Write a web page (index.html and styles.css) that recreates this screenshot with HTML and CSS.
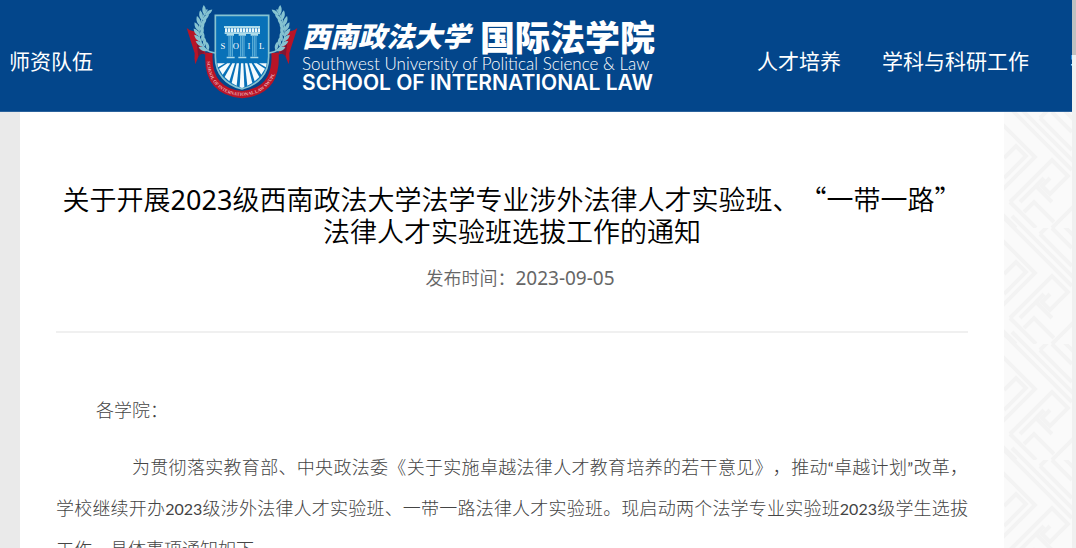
FILE: index.html
```
<!DOCTYPE html>
<html lang="zh-CN">

<head>
    <meta charset="UTF-8">
    <title>西南政法大学国际法学院</title>
    <link rel="stylesheet" href="styles.css">
</head>

<body>
    <div class="page">
        <header class="header">
            <nav class="menu">
                <a href="#">师资队伍</a>
            </nav>
            <a class="brand" href="#">
                <svg class="emblem" viewBox="0 0 390 300" aria-hidden="true">
                    <defs>
                        <g id="leaf">
                            <path d="M0 4C-13 0 -17 -11 -16 -22C-5 -17 0 -9 0 4Z" />
                            <path d="M0 4C11 0 15 -10 13 -21C4 -16 -1 -8 0 4Z" />
                        </g>
                        <g id="laurel">
                            <path d="M106 159Q72 157 60 120Q48 80 82 28" fill="none" stroke="#86c3d1" stroke-width="4" />
                            <use href="#leaf" transform="translate(76 42) rotate(26)" />
                            <use href="#leaf" transform="translate(68 57) rotate(20)" />
                            <use href="#leaf" transform="translate(62 73) rotate(12)" />
                            <use href="#leaf" transform="translate(59 89) rotate(2)" />
                            <use href="#leaf" transform="translate(60 105) rotate(-8)" />
                            <use href="#leaf" transform="translate(64 121) rotate(-16)" />
                            <use href="#leaf" transform="translate(71 136) rotate(-26)" />
                            <use href="#leaf" transform="translate(82 149) rotate(-38)" />
                        </g>
                        <g id="ribbon">
                            <path fill="#b81427" d="M20 84Q35 98 49 92Q50 124 75 152L77 164Q62 158 57 166L46 193Q42 177 44 160Q33 125 20 84Z" />
                            <path fill="#7d1733" d="M49 118Q57 145 75 160Q60 160 55 171Z" />
                        </g>
                        <path id="ring" d="M81 184C83 322 289 322 291 184" />
                    </defs>
                    <path d="M87 158Q79 274 186 284Q293 274 285 158" fill="none" stroke="#b81427" stroke-width="22" />
                    <use href="#ribbon" />
                    <use href="#ribbon" transform="translate(372 0) scale(-1 1)" />
                    <g fill="#86c3d1">
                        <use href="#laurel" />
                        <use href="#laurel" transform="translate(372 0) scale(-1 1)" />
                    </g>
                    <path d="M106 46H266V170C266 222 234 255 186 267C138 255 106 222 106 170Z" fill="#0871b8" stroke="#86c3d1" stroke-width="5" />
                    <g fill="#f4fbfd">
                        <path d="M183 190H190L193 261L186 264L179 261Z" />
                        <path d="M170 190H177L170 257L155 249Z" />
                        <path d="M195 190H202L217 249L202 257Z" />
                        <path d="M157 190H165L148 244L134 231Z" />
                        <path d="M207 190H215L238 231L224 244Z" />
                        <path d="M142 190H151L128 224L117 206Z" />
                        <path d="M221 190H230L255 206L244 224Z" />
                        <path d="M119 190H135L114 202L112 190Z" />
                        <path d="M237 190H253H260L258 202Z" />
                    </g>
                    <g fill="#acdbe9">
                        <path d="M132 78H240V84H132ZM134 97H240V102H134Z" />
                        <path d="M140 102H162V107H140ZM176 102H198V107H176ZM212 102H234V107H212Z" />
                        <path d="M140 170H164V175H140ZM175 170H199V175H175ZM211 170H235V175H211Z" />
                    </g>
                    <path d="M135 91H240" stroke="#e8f7fa" stroke-width="12" stroke-dasharray="7 2" />
                    <path d="M147 107V170M152 107V170M157 107V170M182 107V170M187 107V170M192 107V170M218 107V170M223 107V170M228 107V170" stroke="#67b6dc" stroke-width="3" />
                    <g class="emblem-name">
                        <text x="129" y="147">S</text>
                        <text x="168" y="147">O</text>
                        <text x="207" y="147">I</text>
                        <text x="245" y="147">L</text>
                    </g>
                    <text class="emblem-ring"><textPath href="#ring">SCHOOL OF INTERNATIONAL LAW SWUPL</textPath></text>
                </svg>
                <span class="brand-text">
                    <span class="brand-cn"><span class="university">西南政法大学</span><span class="school">国际法学院</span></span>
                    <span class="university-en">Southwest University of Political Science &amp; Law</span>
                    <span class="school-en">SCHOOL OF INTERNATIONAL LAW</span>
                </span>
            </a>
            <nav class="menu">
                <a href="#">人才培养</a>
                <a href="#">学科与科研工作</a>
                <a href="#">学生工作</a>
            </nav>
        </header>

        <main class="content">
            <article class="article">
                <h1>关于开展<span class="num">2023</span>级西南政法大学法学专业涉外法律人才实验班、“一带一路”法律人才实验班选拔工作的通知</h1>
                <p class="date">发布时间：<time datetime="2023-09-05">2023-09-05</time></p>
                <div class="text">
                    <p class="greeting">各学院：</p>
                    <p>为贯彻落实教育部、中央政法委《关于实施卓越法律人才教育培养的若干意见》，推动<span class="latin">“</span>卓越计划<span class="latin">”</span>改革，学校继续开办<span class="latin">2023</span>级涉外法律人才实验班、一带一路法律人才实验班。现启动两个法学专业实验班<span class="latin">2023</span>级学生选拔工作，具体事项通知如下</p>
                </div>
            </article>
        </main>
    </div>
    <div class="scrollbar">
        <div class="thumb"></div>
    </div>
</body>

</html>
```
FILE: styles.css
```
* {
    box-sizing: border-box;
}

body {
    margin: 0;
    height: 100vh;
    display: flex;
    overflow: hidden;
    font-family: "Noto Sans CJK SC", sans-serif;
    text-spacing-trim: space-all;
}

a {
    color: white;
    text-decoration: none;
}

.page {
    flex: 1;
    min-width: 0;
    display: flex;
    flex-direction: column;
    overflow: hidden;
}

/* header */
.header {
    flex: none;
    display: flex;
    height: 112px;
    padding-left: 9px;
    background-color: #03468b;
    border-bottom: 1px solid #2a629c;
    overflow: hidden;
}

.menu {
    flex: none;
    display: flex;
    align-items: center;
    gap: 41px;
    padding-top: 8px;
    font-size: 21px;
    white-space: nowrap;
}

.brand {
    flex: none;
    display: flex;
    margin: 0 102px 0 87px;
}

.emblem {
    width: 130px;
    height: 100px;
}

.emblem-name {
    font-family: "Liberation Serif", serif;
    font-size: 26px;
    fill: white;
    text-anchor: middle;
}

.emblem-ring {
    font-family: "Liberation Serif", serif;
    font-size: 14px;
    font-weight: bold;
    fill: #e9a9b2;
}

.brand-text {
    display: flex;
    flex-direction: column;
    width: 353px;
    margin-left: -8px;
    padding-top: 15px;
    white-space: nowrap;
}

.brand-cn {
    display: flex;
    justify-content: space-between;
    align-items: center;
    height: 40px;
    font-weight: 900;
}

.university {
    font-size: 28px;
    font-style: italic;
}

.school {
    font-size: 35px;
}

.university-en {
    font-family: Lato, sans-serif;
    font-size: 17px;
    font-weight: 300;
    line-height: 18px;
}

.school-en {
    font-family: Inter, sans-serif;
    font-size: 21px;
    font-weight: 600;
    line-height: 20px;
}

/* article */
.content {
    flex: 1;
    min-height: 0;
    display: flex;
    padding: 0 68px 0 20px;
    background-color: #fafafa;
    background-image: linear-gradient(#eaeaea, #eaeaea), url("data:image/svg+xml,%3Csvg xmlns='http://www.w3.org/2000/svg' width='68' height='116' fill='none' stroke='%23f3f3f3' stroke-width='4'%3E%3Cpath d='M-4 -14L68 58M-4 102L68 174M8 -12L72 52M8 104L72 168M-4 10L31 45L-4 80M36 6L48 -6M36 6L68 38M48 0L68 20M58 -4L72 10M0 46L12 34L22 44L0 66M6 90L48 48L64 64L46 82L38 74L46 66M6 90L32 116M16 90L32 74L48 90M32 74L40 66M20 100L30 90L50 110M48 116L72 92M-4 100L12 116'/%3E%3C/svg%3E");
    background-size: 20px 100%, 68px 116px;
    background-position: left top, right top;
    background-repeat: no-repeat, repeat-y;
}

.article {
    flex: 1;
    min-width: 0;
    padding: 71px 36px 0;
    background-color: white;
    overflow: hidden;
}

h1 {
    margin: 0;
    font-size: 27px;
    font-weight: 350;
    line-height: 32px;
    text-align: center;
    color: black;
}

.num {
    font-family: "Noto Sans", sans-serif;
    font-weight: 400;
    line-height: 1;
}

.date {
    margin: 0;
    padding: 16px 0 40px 16px;
    border-bottom: 2px solid #f0f0f0;
    font-size: 18px;
    font-weight: 350;
    line-height: 28px;
    text-align: center;
    color: #666;
}

.date time {
    font-family: "Noto Sans", sans-serif;
    font-size: 19px;
    font-weight: 400;
    line-height: 1;
}

.text {
    padding-top: 56px;
    font-size: 18px;
    font-weight: 300;
    line-height: 41px;
    color: #444;
}

.text p {
    margin: 0 0 16px;
    text-indent: 76px;
    text-align: justify;
}

.text .greeting {
    text-indent: 40px;
}

.latin {
    font-family: Lato, sans-serif;
    font-size: 16px;
    font-weight: 400;
    line-height: 1;
}

/* scrollbar */
.scrollbar {
    flex: none;
    width: 4px;
    background-color: #f0f0f0;
}

.thumb {
    height: 55px;
    background-color: #c1c1c1;
}
```
